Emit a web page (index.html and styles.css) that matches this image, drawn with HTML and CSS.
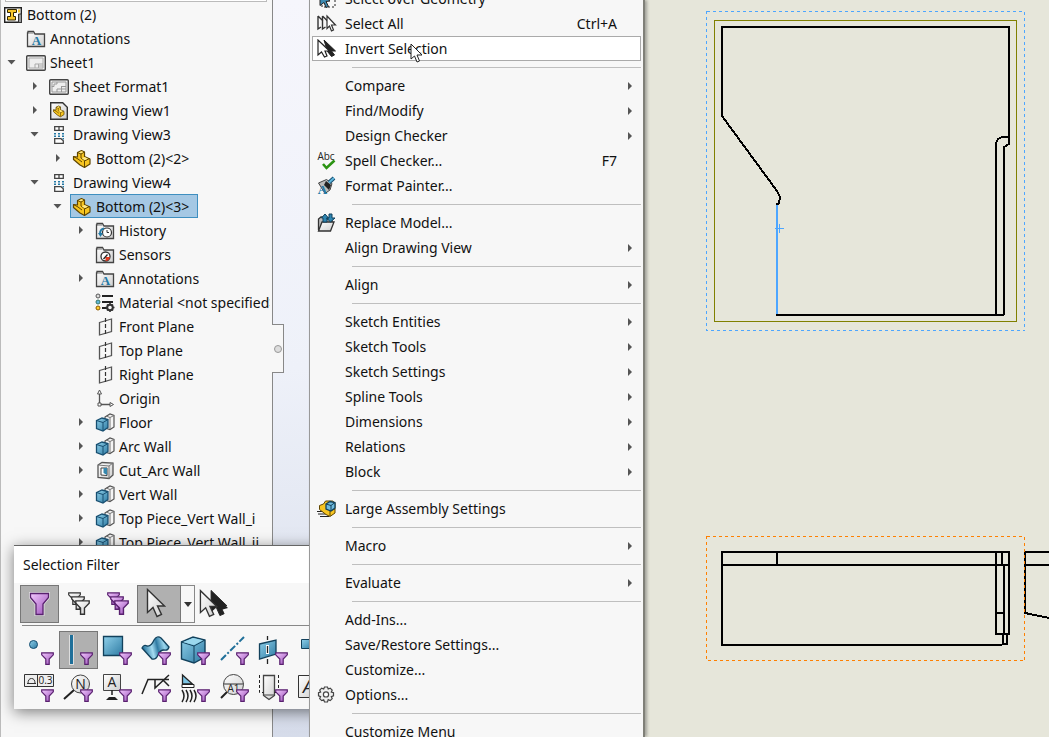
FILE: index.html
```
<!DOCTYPE html>
<html lang="en">
<head>
<meta charset="utf-8">
<title>Bottom (2) - Drawing</title>
<link rel="stylesheet" href="styles.css">
</head>
<body>
<svg class="defs" width="0" height="0" aria-hidden="true">
  <defs>
    <linearGradient id="purple" x1="0" x2="1" y1="0" y2="1"><stop offset="0" stop-color="#f3c9ff"/><stop offset="1" stop-color="#9a4fb8"/></linearGradient>
    <linearGradient id="blue" x1="0" x2="1" y1="0" y2="1"><stop offset="0" stop-color="#8fd0ea"/><stop offset="1" stop-color="#2e7ba3"/></linearGradient>
    <linearGradient id="grey" x1="0" x2="1" y1="0" y2="1"><stop offset="0" stop-color="#ffffff"/><stop offset="1" stop-color="#cfcfcf"/></linearGradient>
    <linearGradient id="wave" x1="0" x2="1" y1=".2" y2="0"><stop offset="0" stop-color="#2e7ba3"/><stop offset=".3" stop-color="#a5dcf1"/><stop offset=".5" stop-color="#2f7ba4"/><stop offset=".75" stop-color="#9ad5ec"/><stop offset="1" stop-color="#3c8ab2"/></linearGradient>
  </defs>
  <symbol id="open" viewBox="0 0 20 24"><path d="M6.500 10h8l-4 4.500z" fill="#555"/></symbol>
  <symbol id="closed" viewBox="0 0 20 24"><path d="M9 8v8l4-4z" fill="#555"/></symbol>
  <symbol id="arrow" viewBox="0 0 6 10"><path d="M2 1v8l4-4z" fill="#555"/></symbol>
  <symbol id="drawing" viewBox="0 0 20 20"><path d="M1.700 2.700h16.600v14.600H1.700z" fill="#fff" stroke="#222" stroke-width="1.400"/><path d="M4.500 4.500h9v3h-3v4h2v3.500h-8v-3.500h3v-4h-3z" fill="#f6c62b" stroke="#332600" stroke-width="1"/><path d="M15 4.500h2v3h-2z" fill="#f6c62b"/><path d="M15.500 9h3v8.500h-3z" fill="#999" stroke="#333"/></symbol>
  <symbol id="folder" viewBox="0 0 20 20"><path d="M2 4V2.500h5.500L9 5h9.500v12.500h-17V4z" fill="url(#grey)" stroke="#444" stroke-width="1.300"/><path d="M3 4h4.500" stroke="#777"/></symbol>
  <symbol id="annotations" viewBox="0 0 20 20"><use href="#folder"/><text x="10.500" y="16" class="glyph-a">A</text></symbol>
  <symbol id="history" viewBox="0 0 20 20"><use href="#folder"/><circle cx="12" cy="11.500" r="4.500" fill="#fff" stroke="#333" stroke-width="1.200"/><path d="M12 9v2.500h2" stroke="#333" fill="none"/><path d="M9 7.500Q5 8 5 13" fill="none" stroke="#2379a5" stroke-width="2"/><path d="M3 12h5l-2.500 4z" fill="#2379a5"/></symbol>
  <symbol id="sensors" viewBox="0 0 20 20"><use href="#folder"/><circle cx="10.500" cy="11.500" r="4.500" fill="#fff" stroke="#333" stroke-width="1.300"/><path d="M10.500 12h4.500q-.5 4-4.500 4z" fill="#e33b20"/><path d="M8.500 14l4-4.500" stroke="#222" stroke-width="1.300"/></symbol>
  <symbol id="sheet" viewBox="0 0 20 20"><rect x=".7" y="2.700" width="18.600" height="14.600" rx="1" fill="#eee" stroke="#444" stroke-width="1.400"/><path d="M3 5h14v10H3zM9 15v-4h8M12.500 11v4M12.500 13H17" fill="none" stroke="#aaa"/></symbol>
  <symbol id="format" viewBox="0 0 20 20"><rect x=".7" y="2.700" width="18.600" height="14.600" rx="1" fill="#eee" stroke="#444" stroke-width="1.400"/><path d="M3 9.500V5h5v2H5v2.500zM3 9v6h14V5H8M8 15v-3h9M12.500 9v6M12.500 9.500H17" fill="none" stroke="#999"/></symbol>
  <symbol id="part" viewBox="0 0 20 20"><path d="M5.500 3.500l4-2 3 1.500v4.500l5.500 2.500v5L12.500 18.500l-4.500-2.500-6.500-5.500v-3L5.500 8z" fill="#f7c520" stroke="#604600" stroke-width="1.200" stroke-linejoin="round"/><path d="M5.500 3.500l3.500 1.500v4l3.500 2.500v6.500M9 5l3.500-2M12.500 12l5-2.500M1.500 7.500L6 10l4 3" fill="none" stroke="#604600"/><path d="M6.500 3.500l3-1.300 2 .9L9 4.300zM9.800 9.200l2.700-1.300 3.500 1.700-3.400 1.600z" fill="#ffe985"/></symbol>
  <symbol id="view1" viewBox="0 0 20 20"><path d="M1.700 1.700h12l4.600 4.600v12H1.700z" fill="url(#grey)" stroke="#333" stroke-width="1.400"/><g transform="translate(3.500 4) scale(.64)"><use href="#part" width="20" height="20"/></g></symbol>
  <symbol id="view" viewBox="0 0 20 20"><path d="M5.700 1.700h8.600v3.600H5.700zM10 1.700v3.600M5.700 18.300v-4.600h6.300l2.300 2v2.600z" fill="#fff" stroke="#444" stroke-width="1.300"/><path d="M5 8h2v1.500H5zM9 8h2v1.500H9zM13 8h2v1.500h-2zM5 10.500h2V12H5zM9 10.500h2V12H9zM13 10.500h2V12h-2zM13 13h2v2z" fill="#2379a5"/></symbol>
  <symbol id="material" viewBox="0 0 20 20"><path d="M7 3h11M7 9h11M7 15h5" stroke="#222" stroke-width="2"/><circle cx="3" cy="3" r="2" fill="#ddd" stroke="#555"/><circle cx="3" cy="9" r="2" fill="#5fb6dc" stroke="#376"/><circle cx="3" cy="15" r="2" fill="#ffcf2e" stroke="#850"/><circle cx="15" cy="14.500" r="2.800" fill="none" stroke="#333" stroke-width="2"/><path d="M15 10v2M15 17v2M10.500 14.500h2M17.500 14.500h2M12 11.500l1 1M17 16.500l1 1M18 11.500l-1 1M13 16.500l-1 1" stroke="#333" stroke-width="1.600"/></symbol>
  <symbol id="plane" viewBox="0 0 20 20"><path d="M4.500 5.500l12-3.500v12.500l-12 3.500z" fill="none" stroke="#555" stroke-width="1.300"/><path d="M10.500 1v18" stroke="#333" stroke-width="1.200" stroke-dasharray="4 2"/></symbol>
  <symbol id="origin" viewBox="0 0 20 20"><path d="M4.500 3v12.500H17" fill="none" stroke="#555" stroke-width="1.300"/><path d="M2.500 5l2-4 2 4zM15 13.500l3.500 2-3.500 2zM3 14h3v3H3z" fill="#fff" stroke="#555"/></symbol>
  <symbol id="boss" viewBox="0 0 20 20"><path d="M10 4l5-3 4 1.500v11.500l-4 2.500-5-1.500z" fill="#f5f5f5" stroke="#555" stroke-width="1.200"/><path d="M15 16V4.500L19 2.500M15 4.500L11 3" fill="none" stroke="#777"/><path d="M1.500 7.500L7 5l6 1.500v8L8 18l-6.500-2.500z" fill="url(#blue)" stroke="#174e70" stroke-width="1.300"/><path d="M1.500 7.500l6.500 2V18M8 9.500l5-3" fill="none" stroke="#174e70"/></symbol>
  <symbol id="cut" viewBox="0 0 20 20"><path d="M3 4l4-2.500L18 2v12l-4 3.500-11-1z" fill="url(#grey)" stroke="#555" stroke-width="1.300"/><path d="M14 17.500V5L3 4M14 5l4-3" fill="none" stroke="#777"/><path d="M6 7h6v7.500l-6-.5z" fill="#fff" stroke="#444"/><path d="M8.500 7H12v7l-3.500-2z" fill="#3587ad"/></symbol>
  <symbol id="funnel" viewBox="0 0 13 13"><path d="M.7.800h11.600v2L8.200 7v5.300H4.800V7L.7 2.800z" fill="url(#purple)" stroke="#59216f" stroke-width="1.200"/></symbol>
  <symbol id="funnel-w" viewBox="0 0 13 13"><path d="M.7.800h11.600v2L8.200 7v5.300H4.800V7L.7 2.800z" fill="url(#grey)" stroke="#333" stroke-width="1.200"/></symbol>
  <symbol id="pointer" viewBox="0 0 20 30"><path d="M1.500 1.500v23l5.500-5 4 9 4.500-2-4-8.500h7z" fill="url(#grey)" stroke="#333" stroke-width="1.400"/></symbol>
  <symbol id="pointer-d" viewBox="0 0 20 30"><path d="M1.500 1.500v23l5.500-5 4 9 4.500-2-4-8.500h7z" fill="#222" stroke="#222"/></symbol>
</svg>

<div class="app">
  <aside class="panel">
    <div class="filter-edge"></div>
    <ul class="tree">
      <li><button class="label"><svg class="icon"><use href="#drawing"/></svg>Bottom (2)</button>
        <ul>
          <li><div class="row"><span class="toggle"></span><button class="label"><svg class="icon"><use href="#annotations"/></svg>Annotations</button></div></li>
          <li><div class="row"><svg class="toggle"><use href="#open"/></svg><button class="label"><svg class="icon"><use href="#sheet"/></svg>Sheet1</button></div>
            <ul class="nested">
              <li><div class="row"><svg class="toggle"><use href="#closed"/></svg><button class="label"><svg class="icon"><use href="#format"/></svg>Sheet Format1</button></div></li>
              <li><div class="row"><svg class="toggle"><use href="#closed"/></svg><button class="label"><svg class="icon"><use href="#view1"/></svg>Drawing View1</button></div></li>
              <li><div class="row"><svg class="toggle"><use href="#open"/></svg><button class="label"><svg class="icon"><use href="#view"/></svg>Drawing View3</button></div>
                <ul class="nested">
                  <li><div class="row"><svg class="toggle"><use href="#closed"/></svg><button class="label"><svg class="icon"><use href="#part"/></svg>Bottom (2)&lt;2&gt;</button></div></li>
                </ul>
              </li>
              <li><div class="row"><svg class="toggle"><use href="#open"/></svg><button class="label"><svg class="icon"><use href="#view"/></svg>Drawing View4</button></div>
                <ul class="nested">
                  <li><div class="row"><svg class="toggle"><use href="#open"/></svg><button class="label selected"><svg class="icon"><use href="#part"/></svg>Bottom (2)&lt;3&gt;</button></div>
                    <ul class="nested">
                      <li><div class="row"><svg class="toggle"><use href="#closed"/></svg><button class="label"><svg class="icon"><use href="#history"/></svg>History</button></div></li>
                      <li><div class="row"><span class="toggle"></span><button class="label"><svg class="icon"><use href="#sensors"/></svg>Sensors</button></div></li>
                      <li><div class="row"><svg class="toggle"><use href="#closed"/></svg><button class="label"><svg class="icon"><use href="#annotations"/></svg>Annotations</button></div></li>
                      <li><div class="row"><span class="toggle"></span><button class="label"><svg class="icon"><use href="#material"/></svg>Material &lt;not specified&gt;</button></div></li>
                      <li><div class="row"><span class="toggle"></span><button class="label"><svg class="icon"><use href="#plane"/></svg>Front Plane</button></div></li>
                      <li><div class="row"><span class="toggle"></span><button class="label"><svg class="icon"><use href="#plane"/></svg>Top Plane</button></div></li>
                      <li><div class="row"><span class="toggle"></span><button class="label"><svg class="icon"><use href="#plane"/></svg>Right Plane</button></div></li>
                      <li><div class="row"><span class="toggle"></span><button class="label"><svg class="icon"><use href="#origin"/></svg>Origin</button></div></li>
                      <li><div class="row"><svg class="toggle"><use href="#closed"/></svg><button class="label"><svg class="icon"><use href="#boss"/></svg>Floor</button></div></li>
                      <li><div class="row"><svg class="toggle"><use href="#closed"/></svg><button class="label"><svg class="icon"><use href="#boss"/></svg>Arc Wall</button></div></li>
                      <li><div class="row"><svg class="toggle"><use href="#closed"/></svg><button class="label"><svg class="icon"><use href="#cut"/></svg>Cut_Arc Wall</button></div></li>
                      <li><div class="row"><svg class="toggle"><use href="#closed"/></svg><button class="label"><svg class="icon"><use href="#boss"/></svg>Vert Wall</button></div></li>
                      <li><div class="row"><svg class="toggle"><use href="#closed"/></svg><button class="label"><svg class="icon"><use href="#boss"/></svg>Top Piece_Vert Wall_i</button></div></li>
                      <li><div class="row"><svg class="toggle"><use href="#closed"/></svg><button class="label"><svg class="icon"><use href="#boss"/></svg>Top Piece_Vert Wall_ii</button></div></li>
                    </ul>
                  </li>
                </ul>
              </li>
            </ul>
          </li>
        </ul>
      </li>
    </ul>
  </aside>
  <div class="gutter"><button class="handle" aria-label="Collapse panel"></button></div>
  <main class="sheet">
    <svg class="drawing" aria-label="Drawing sheet">
      <g transform="translate(-310 0)" fill="none" shape-rendering="crispEdges">
        <rect x="706.500" y="11.500" width="318" height="319" stroke="#4da6ff" stroke-dasharray="3 3"/>
        <rect x="714.500" y="20.500" width="302" height="301" stroke="#808000"/>
        <g stroke="#000" stroke-width="2">
          <path d="M722 117V27H1009V144L1004 147V315M776 315H1004M1009 137H1002L998 139L996 143V315"/>
          <path d="M722 116L777 191L780 197L779 203L776 205"/>
          <path d="M722 552H1009V634H996V552M722 551V645H1002M722 565H1009M777 552V565M1002 552V565M1004 565V633M996 613H1004M1003 634V644H1007V634"/>
          <path d="M1049 552H1025V613L1049 618M1025 565H1049"/>
        </g>
        <path d="M777 205V314" stroke="#4da6ff" stroke-width="2"/>
        <path d="M775 228.500H784M779.500 224V233" stroke="#4da6ff"/>
        <rect x="706.500" y="536.500" width="318" height="124" stroke="#ff8000" stroke-dasharray="3 3"/>
      </g>
    </svg>
  </main>
</div>

<section class="dialog" aria-label="Selection Filter">
  <h1 class="dialog-title">Selection Filter</h1>
  <div class="tools first">
    <button class="tool active" aria-label="Toggle filters"><svg><path d="M10.500 8.500h18v4l-5.500 6.500v10.500h-7V19l-5.500-6.500z" fill="none" stroke="#ddd" stroke-width="3"/><path d="M10.500 8.500h18v4l-5.500 6.500v10.500h-7V19l-5.500-6.500z" fill="url(#purple)" stroke="#59216f" stroke-width="1.300"/></svg></button>
    <button class="tool" aria-label="Clear all filters"><svg><use href="#funnel-w" x="9" y="7" width="13" height="13"/><use href="#funnel-w" x="12" y="11" width="14" height="14"/><use href="#funnel-w" x="16" y="15" width="15" height="15"/></svg></button>
    <button class="tool" aria-label="Select all filters"><svg><use href="#funnel" x="9" y="7" width="13" height="13"/><use href="#funnel" x="12" y="11" width="14" height="14"/><use href="#funnel" x="16" y="15" width="15" height="15"/></svg></button>
    <button class="tool active wide" aria-label="Select"><svg><use href="#pointer" x="9" y="3" width="20" height="30"/></svg></button>
    <button class="drop" aria-label="Select options"><svg width="8" height="5"><path d="M0 0h8L4 5z" fill="#333"/></svg></button>
    <button class="tool" aria-label="Invert selection"><svg><use href="#pointer-d" x="14" y="4" width="20" height="28"/><path d="M16 7l17 16-7 2z" fill="#222"/><use href="#pointer" x="4" y="4" width="19" height="29"/></svg></button>
  </div>
  <div class="tools">
    <button class="tool" aria-label="Filter vertices"><svg><circle cx="13.500" cy="13.500" r="4" fill="url(#blue)" stroke="#174e70"/><use href="#funnel" x="21" y="21" width="13" height="13"/></svg></button>
    <button class="tool active" aria-label="Filter edges"><svg><path d="M12.500 4v30" stroke="#ddd" stroke-width="5"/><path d="M12.500 4v29" stroke="#1f6f99" stroke-width="3"/><use href="#funnel" x="21" y="21" width="13" height="13"/></svg></button>
    <button class="tool" aria-label="Filter faces"><svg><path d="M5.500 5.500h19v19h-19z" fill="url(#blue)" stroke="#12415c" stroke-width="1.300"/><use href="#funnel" x="21" y="21" width="13" height="13"/></svg></button>
    <button class="tool" aria-label="Filter surface bodies"><svg><path d="M5 17q2-4 5-2 4 1 7-6 3-5 7-2l8 9q-1 4-5 3-4 0-6 5-2 5-6 4z" fill="url(#wave)" stroke="#12415c" stroke-width="1.300" stroke-linejoin="round"/><use href="#funnel" x="21" y="21" width="13" height="13"/></svg></button>
    <button class="tool" aria-label="Filter solid bodies"><svg><path d="M5.500 11L17 6l12 3v17l-11 6-12.500-4z" fill="url(#blue)" stroke="#12415c" stroke-width="1.400"/><path d="M5.500 11L18 15l11-6M18 15v17" stroke="#12415c" fill="none"/><path d="M7 11l10-4 10 2.300-9 4.700z" fill="#9bd8ee"/><use href="#funnel" x="21" y="21" width="13" height="13"/></svg></button>
    <button class="tool" aria-label="Filter axes"><svg><path d="M6 29L29 6" stroke="#1f6f99" stroke-width="2" stroke-dasharray="7 2 2 2"/><use href="#funnel" x="21" y="21" width="13" height="13"/></svg></button>
    <button class="tool" aria-label="Filter planes"><svg><path d="M5.500 13L22 9v14L5.500 28z" fill="url(#blue)" stroke="#12415c" stroke-width="1.300"/><path d="M13.500 14v9" stroke="#fff" stroke-width="3"/><path d="M13.500 5v4M13.500 15v7M13.500 28v5" stroke="#222" stroke-width="1.300"/><use href="#funnel" x="21" y="21" width="13" height="13"/></svg></button>
    <button class="tool" aria-label="Filter sketch points"><svg><path d="M8.500 8.500h12v9h-12z" fill="url(#blue)" stroke="#12415c"/></svg></button>
  </div>
  <div class="tools">
    <button class="tool" aria-label="Filter tolerances"><svg><path d="M4.500 5.500h29v12h-29zM17.500 5.500v12" fill="#eee" stroke="#333"/><path d="M7 14.500h9M8 14.500q0-5 3.500-5t3.500 5" fill="none" stroke="#333"/><text x="25.500" y="15" class="glyph-s">0.3</text><use href="#funnel" x="21" y="20" width="13" height="13"/></svg></button>
    <button class="tool" aria-label="Filter notes"><svg><path d="M5 30l10-9" stroke="#222" stroke-width="2"/><circle cx="21.500" cy="15" r="9" fill="url(#grey)" stroke="#444"/><text x="21.500" y="20" class="glyph-m">N</text><use href="#funnel" x="21" y="20" width="13" height="13"/></svg></button>
    <button class="tool" aria-label="Filter datums"><svg><path d="M5.500 5.500h17v16h-17z" fill="url(#grey)" stroke="#444"/><text x="14" y="18" class="glyph-m">A</text><path d="M14 21v5" stroke="#222" stroke-width="1.500"/><path d="M8 31l3-3h6l3 3z" fill="#222"/><use href="#funnel" x="21" y="20" width="13" height="13"/></svg></button>
    <button class="tool" aria-label="Filter weld symbols"><svg><path d="M5 25l6-14.500h21M18 10.500V19L32 6M26 11l6 6" fill="none" stroke="#222" stroke-width="1.500"/><use href="#funnel" x="21" y="20" width="13" height="13"/></svg></button>
    <button class="tool" aria-label="Filter welds"><svg><path d="M6.500 6v9h10z" fill="#7cc5e4" stroke="#222" stroke-width="1.300"/><path d="M6 15.500h12v3H6z" fill="#fff" stroke="#222"/><path d="M6 21q4 6 0 12M10 21q4 6 0 12M14 21q4 6 0 12M18 21q4 6 0 12" fill="none" stroke="#222" stroke-width="1.500"/><use href="#funnel" x="21" y="20" width="13" height="13"/></svg></button>
    <button class="tool" aria-label="Filter datum targets"><svg><path d="M6 29l6-6" stroke="#222" stroke-width="2"/><circle cx="18.500" cy="15.500" r="10" fill="url(#grey)" stroke="#444"/><path d="M8.500 15h20" stroke="#333"/><text x="18.500" y="23" class="glyph-s">A1</text><use href="#funnel" x="21" y="20" width="13" height="13"/></svg></button>
    <button class="tool" aria-label="Filter cosmetic threads"><svg><path d="M9.500 6.500h11v20l-5.500 4-5.500-4z" fill="url(#grey)" stroke="#444" stroke-width="1.300"/><path d="M9.500 26h11" stroke="#444"/><path d="M5.500 6v17.500h4M24.500 6v17.500h-4" fill="none" stroke="#222" stroke-dasharray="3 2"/><use href="#funnel" x="21" y="20" width="13" height="13"/></svg></button>
    <button class="tool" aria-label="Filter blocks"><svg><path d="M5.500 6.500h20v22h-20z" fill="url(#grey)" stroke="#333"/><text x="15" y="24" class="glyph-i">A</text></svg></button>
  </div>
</section>

<nav class="menu" aria-label="Tools">
  <div class="menu-list">
    <button class="item"><svg class="icon"><path d="M5 4h13v14H5z" fill="none" stroke="#222" stroke-dasharray="2 2"/><path d="M3 4l10 8-4 .5 2.500 5-2.500 1-2-5-4 3z" fill="#3c8ab2" stroke="#222"/></svg><span>Select over Geometry</span></button>
    <button class="item"><svg class="icon"><path d="M1 2v13l3-2M5.500 2v13l3-2M1 2l5 5M5.500 2l5 5" fill="none" stroke="#333" stroke-width="1.400"/><path d="M10 2l8.500 9h-4l2 5-2 1-2-5-2.500 2.500z" fill="#fff" stroke="#333" stroke-width="1.200"/></svg><span>Select All</span><kbd>Ctrl+A</kbd></button>
    <button class="item hover"><svg class="icon"><path d="M7 1l11.500 11h-4l3 4-3 1.500-4-5z" fill="#222" stroke="#222"/><path d="M1 1v15l3.500-3 3 5 2.500-1L8 12h4.500z" fill="#fff" stroke="#222" stroke-width="1.200"/></svg><span>Invert Selection</span></button>
    <hr>
    <button class="item"><i></i><span>Compare</span><svg class="sub"><use href="#arrow"/></svg></button>
    <button class="item"><i></i><span>Find/Modify</span><svg class="sub"><use href="#arrow"/></svg></button>
    <button class="item"><i></i><span>Design Checker</span><svg class="sub"><use href="#arrow"/></svg></button>
    <button class="item"><svg class="icon"><text x="9" y="9" class="glyph-s">Abc</text><path d="M6 13l3.500 4L17.500 9.500" fill="none" stroke="#2b9312" stroke-width="2.600"/></svg><span>Spell Checker...</span><kbd>F7</kbd></button>
    <button class="item"><svg class="icon"><path d="M1.500 7l8-3.500 5.500 4-2 6.500-5 3.500z" fill="#bbb" stroke="#444"/><path d="M9 5l5 4-2 5-5-5z" fill="#222"/><path d="M12 6.500l5-4.500" stroke="#174e70" stroke-width="4"/><path d="M12 6.500l5-4.500" stroke="#5fb6dc" stroke-width="2"/><text x="5.500" y="18" class="glyph-a">A</text></svg><span>Format Painter...</span></button>
    <hr>
    <button class="item"><svg class="icon"><path d="M1.500 17V6L4 4h4l2 2h5v4" fill="#bbb" stroke="#333" stroke-width="1.300"/><path d="M1.500 18L5 9h12l-3.500 9z" fill="url(#grey)" stroke="#333" stroke-width="1.300"/><path d="M6 9V5H4.500L8 1l3.500 4H10v4zM12 1h3v4h3l-4.500 4L9.500 5H12z" fill="#2e86b2" stroke="#12415c"/></svg><span>Replace Model...</span></button>
    <button class="item"><i></i><span>Align Drawing View</span><svg class="sub"><use href="#arrow"/></svg></button>
    <hr>
    <button class="item"><i></i><span>Align</span><svg class="sub"><use href="#arrow"/></svg></button>
    <hr>
    <button class="item"><i></i><span>Sketch Entities</span><svg class="sub"><use href="#arrow"/></svg></button>
    <button class="item"><i></i><span>Sketch Tools</span><svg class="sub"><use href="#arrow"/></svg></button>
    <button class="item"><i></i><span>Sketch Settings</span><svg class="sub"><use href="#arrow"/></svg></button>
    <button class="item"><i></i><span>Spline Tools</span><svg class="sub"><use href="#arrow"/></svg></button>
    <button class="item"><i></i><span>Dimensions</span><svg class="sub"><use href="#arrow"/></svg></button>
    <button class="item"><i></i><span>Relations</span><svg class="sub"><use href="#arrow"/></svg></button>
    <button class="item"><i></i><span>Block</span><svg class="sub"><use href="#arrow"/></svg></button>
    <hr>
    <button class="item"><svg class="icon"><path d="M0 12.500h7M1 15h8M3 17.500h9" stroke="#222"/><path d="M2.500 6.500l4-1.500 2-3h7l2.500 2v10l-5 3.500-4-2-6.500-5z" fill="#f7c520" stroke="#604600"/><path d="M13 17v-5l5-2" fill="none" stroke="#604600"/><path d="M9 5l4-2.500 5 1V9l-4 3-5-2z" fill="#6fbbdd" stroke="#12415c" stroke-width="1.300"/><path d="M9 5l5 1.500 4-3M14 6.500V12" fill="none" stroke="#12415c"/></svg><span>Large Assembly Settings</span></button>
    <hr>
    <button class="item"><i></i><span>Macro</span><svg class="sub"><use href="#arrow"/></svg></button>
    <hr>
    <button class="item"><i></i><span>Evaluate</span><svg class="sub"><use href="#arrow"/></svg></button>
    <hr>
    <button class="item"><i></i><span>Add-Ins...</span></button>
    <button class="item"><i></i><span>Save/Restore Settings...</span></button>
    <button class="item"><i></i><span>Customize...</span></button>
    <button class="item"><svg class="icon"><path d="M7.500 2h3l.7 2 2-.9 2 2-.9 2 2.200.7v3l-2.200.8.9 2-2 2-2-.9-.7 2.300h-3l-.8-2.300-2 .9-2-2 .9-2-2.100-.8v-3l2.100-.7-.9-2 2-2 2 .9z" fill="#eee" stroke="#444" stroke-width="1.200"/><circle cx="9" cy="9.400" r="2.600" fill="#fff" stroke="#444" stroke-width="1.200"/></svg><span>Options...</span></button>
    <hr>
    <button class="item"><i></i><span>Customize Menu</span></button>
  </div>
</nav>

<svg class="cursor" viewBox="0 0 13 20" aria-hidden="true"><path d="M1 1v15l3.500-3 2.500 6 2.500-1L7 12h5z" fill="#fff" stroke="#222"/></svg>
</body>
</html>
```

FILE: styles.css
```
* {
  box-sizing: border-box;
}

body {
  margin: 0;
  overflow: hidden;
  font: 15px/24px "Noto Sans", "Open Sans", sans-serif;
  color: #111;
}

button {
  margin: 0;
  padding: 0;
  border: 0;
  background: none;
  font: inherit;
  color: inherit;
  text-align: left;
}

ul {
  margin: 0;
  padding: 0;
  list-style: none;
}

.defs,
.cursor {
  position: absolute;
}

.app {
  display: flex;
  height: 100vh;
}

/* Feature tree */
.panel {
  flex: 0 0 273px;
  overflow: hidden;
  padding-right: 2px;
  border-left: 1px solid #bbb;
  border-right: 1px solid #888;
  background: #f7f7f7;
}

.filter-edge {
  height: 2px;
  margin: 0 3px 0 4px;
  border: 1px solid #bbb;
  border-top: 0;
  background: #fff;
}

.tree {
  overflow: hidden;
  font-size: 14px;
}

.nested {
  padding-left: 23px;
}

.row {
  display: flex;
}

.toggle {
  flex: none;
  width: 20px;
  height: 24px;
  margin-right: 3px;
}

.label {
  display: flex;
  align-items: center;
  gap: 4px;
  height: 24px;
  padding: 1px 8px 0 1px;
  border: 1px solid transparent;
  white-space: nowrap;
}

.label.selected {
  border-color: #3f8fc0;
  background: #a5c8e4;
}

.icon {
  flex: none;
  width: 20px;
  height: 20px;
}

.gutter {
  flex: 0 0 37px;
  background: linear-gradient(#f6f6fc, #eef1f9 50%, #d6dcea);
}

.handle {
  display: flex;
  align-items: center;
  justify-content: center;
  width: 12px;
  height: 49px;
  margin: 324px 0 0 -1px;
  border: 1px solid #888;
  border-left: 0;
  background: #f7f7f7;
}

.handle::after {
  content: "";
  width: 6px;
  height: 6px;
  border: 1px solid #999;
  border-radius: 50%;
  background: #ddd;
}

.sheet {
  flex: 1;
  background: #e6e6da;
}

.drawing {
  display: block;
  width: 100%;
  height: 100%;
}

/* Floating filter toolbar */
.dialog {
  position: absolute;
  top: 545px;
  left: 14px;
  width: 320px;
  padding-bottom: 2px;
  border-top: 1px solid #666;
  background: #f7f7f7;
  box-shadow: 0 3px 14px rgba(0, 0, 0, 0.5);
}

.dialog-title {
  margin: 0;
  padding: 7px 9px 6px;
  background: #fff;
  font-size: 14px;
  font-weight: 400;
}

.tools {
  display: flex;
  padding-left: 6px;
}

.tools.first {
  margin: 2px 0 5px 8px;
  padding: 0 0 2px;
  border-bottom: 1px solid #888;
}

.tools.first .tool:first-child {
  margin-left: -2px;
}

.tool {
  flex: none;
  width: 39px;
  height: 38px;
}

.tool svg {
  display: block;
  width: 39px;
  height: 38px;
}

.tool.active {
  background: #b0b0b0;
  box-shadow: inset 0 0 0 1px #777;
}

.tool.wide {
  width: 44px;
}

.drop {
  display: flex;
  align-items: center;
  justify-content: center;
  width: 14px;
  height: 38px;
  border: 1px solid #888;
  border-left: 0;
}

/* Drop-down menu */
.menu {
  position: absolute;
  top: 0;
  bottom: 0;
  left: 309px;
  width: 336px;
  overflow: hidden;
  padding: 0 2px;
  border-left: 1px solid #999;
  border-right: 2px solid #808078;
  background: #f7f7f7;
  box-shadow: 2px 0 3px rgba(0, 0, 0, 0.3);
}

.menu-list {
  display: flex;
  flex-direction: column;
  margin-top: -14px;
}

.item {
  display: grid;
  grid-template-columns: 28px 1fr auto;
  align-items: center;
  height: 25px;
  padding: 0 8px 0 4px;
  border: 1px solid transparent;
  font-size: 14px;
  white-space: nowrap;
}

.item.hover {
  border-color: #aaa;
  background: #fff;
}

.item kbd {
  padding-right: 15px;
  font: inherit;
}

.sub {
  width: 6px;
  height: 10px;
}

.menu hr {
  width: calc(100% - 40px);
  margin: 6px 0 5px 40px;
  border: 0;
  border-top: 1px solid #bfbfbf;
}

.cursor {
  top: 43px;
  left: 410px;
  width: 13px;
  height: 20px;
}

/* Lettering inside icons */
.glyph-a {
  fill: #2379a5;
  font: bold 13px "Liberation Serif", serif;
  text-anchor: middle;
}

.glyph-s {
  fill: #222;
  font: 10px "Open Sans", sans-serif;
  text-anchor: middle;
}

.glyph-m {
  fill: #222;
  font: 14px "Open Sans", sans-serif;
  text-anchor: middle;
}

.glyph-i {
  fill: #222;
  font: italic 18px "Open Sans", sans-serif;
  text-anchor: middle;
}
```
